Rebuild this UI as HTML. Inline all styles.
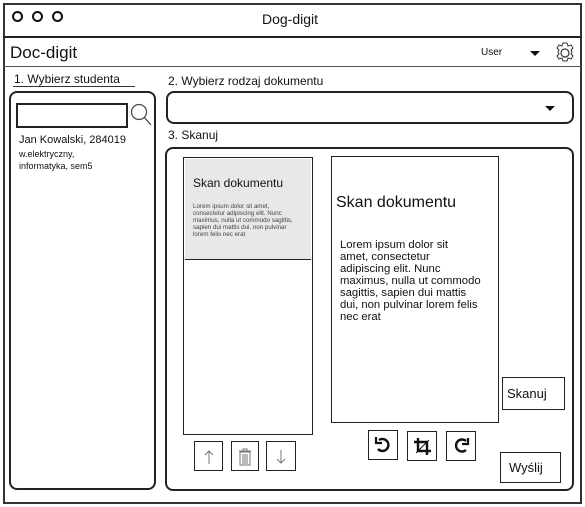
<!DOCTYPE html>
<html><head><meta charset="utf-8"><style>
*{margin:0;padding:0;box-sizing:border-box}
body{width:585px;height:507px;background:#fff;position:relative;overflow:hidden;font-family:"Liberation Sans",sans-serif;color:#111}
.a{position:absolute}
.b{border:2px solid #222}
.t{position:absolute;white-space:nowrap}
</style></head><body>
<div class="a" style="left:3px;top:3px;width:579px;height:501px;border:2px solid #333"></div>
<div class="a" style="left:3px;top:36px;width:579px;height:2px;background:#222"></div>
<div class="a" style="left:3px;top:66px;width:579px;height:1px;background:#555"></div>
<div class="a" style="left:12px;top:11px;width:11px;height:11px;border:2px solid #111;border-radius:50%"></div>
<div class="a" style="left:32px;top:11px;width:11px;height:11px;border:2px solid #111;border-radius:50%"></div>
<div class="a" style="left:52px;top:11px;width:11px;height:11px;border:2px solid #111;border-radius:50%"></div>
<div class="t" style="left:262px;top:11px;font-size:14px">Dog-digit</div>
<div class="t" style="left:10px;top:43px;font-size:17px">Doc-digit</div>
<div class="t" style="left:481px;top:47px;font-size:10px">User</div>
<div class="a" style="left:530px;top:51px;width:0;height:0;border-left:5px solid transparent;border-right:5px solid transparent;border-top:5px solid #111"></div>
<svg class="a" style="left:552px;top:41px" width="26" height="24" viewBox="0 0 26 24"><circle cx="13" cy="12" r="4" fill="none" stroke="#333" stroke-width="1.2"/><path d="M11 2h4l1 3 3-1 2 3-2 2 1 2-1 2 2 2-2 3-3-1-1 3h-4l-1-3-3 1-2-3 2-2-1-2 1-2-2-2 2-3 3 1z" fill="none" stroke="#333" stroke-width="1"/></svg>
<div class="t" style="left:14px;top:72px;font-size:12px">1. Wybierz studenta</div>
<div class="a" style="left:13px;top:86px;width:122px;height:1px;background:#333"></div>
<div class="t" style="left:168px;top:74px;font-size:12px">2. Wybierz rodzaj dokumentu</div>
<div class="t" style="left:168px;top:128px;font-size:12px">3. Skanuj</div>
<div class="a b" style="left:9px;top:91px;width:147px;height:399px;border-radius:8px;border-width:2px"></div>
<div class="a" style="left:16px;top:103px;width:112px;height:25px;border:2px solid #222"></div>
<svg class="a" style="left:129px;top:102px" width="24" height="26"><circle cx="10" cy="10" r="7.5" fill="none" stroke="#444" stroke-width="1.2"/><path d="M15 15l7 8" stroke="#444" stroke-width="1.3"/></svg>
<div class="t" style="left:19px;top:134px;font-size:11px">Jan Kowalski, 284019</div>
<div class="t" style="left:19px;top:148px;font-size:9px;line-height:12px">w.elektryczny,<br>informatyka, sem5</div>
<div class="a b" style="left:166px;top:91px;width:408px;height:33px;border-radius:8px"></div>
<div class="a" style="left:545px;top:106px;width:0;height:0;border-left:5px solid transparent;border-right:5px solid transparent;border-top:5px solid #111"></div>
<div class="a b" style="left:165px;top:147px;width:409px;height:344px;border-radius:8px"></div>
<div class="a b" style="left:183px;top:157px;width:130px;height:278px;border-width:1.5px"></div>
<div class="a" style="left:185px;top:159px;width:126px;height:101px;background:#e8e8e8;border-bottom:1.5px solid #222"></div>
<div class="t" style="left:193px;top:176px;font-size:12px">Skan dokumentu</div>
<div class="t" style="left:193px;top:203px;font-size:6.2px;line-height:7px;color:#444">Lorem ipsum dolor sit amet,<br>consectetur adipiscing elit. Nunc<br>maximus, nulla ut commodo sagittis,<br>sapien dui mattis dui, non pulvinar<br>lorem felis nec erat</div>
<div class="a b" style="left:331px;top:156px;width:168px;height:267px;border-width:1.5px"></div>
<div class="t" style="left:336px;top:194px;font-size:16px">Skan dokumentu</div>
<div class="t" style="left:340px;top:239px;font-size:11.3px;line-height:12px">Lorem ipsum dolor sit<br>amet, consectetur<br>adipiscing elit. Nunc<br>maximus, nulla ut commodo<br>sagittis, sapien dui mattis<br>dui, non pulvinar lorem felis<br>nec erat</div>
<div class="a b" style="left:502px;top:377px;width:63px;height:33px;border-width:1.5px"></div>
<div class="t" style="left:507px;top:386px;font-size:13px">Skanuj</div>
<div class="a b" style="left:500px;top:452px;width:61px;height:31px;border-width:1.5px"></div>
<div class="t" style="left:509px;top:460px;font-size:13px">Wyślij</div>
<div class="a b" style="left:368px;top:430px;width:30px;height:30px;border-width:1.5px"></div>
<div class="a b" style="left:407px;top:431px;width:30px;height:30px;border-width:1.5px"></div>
<div class="a b" style="left:446px;top:431px;width:30px;height:30px;border-width:1.5px"></div>
<svg class="a" style="left:372px;top:434px" width="22" height="22"><path d="M7 6A6 6 0 1 1 6 15" fill="none" stroke="#111" stroke-width="2.4"/><path d="M4 3v6h6" fill="none" stroke="#111" stroke-width="2.2"/></svg>
<svg class="a" style="left:411px;top:435px" width="22" height="22"><path d="M7 3v13h13M3 7h13v13" fill="none" stroke="#111" stroke-width="2.4"/><path d="M5 18L18 5" stroke="#111" stroke-width="1"/></svg>
<svg class="a" style="left:450px;top:435px" width="22" height="22"><path d="M16 6A6 6 0 1 0 16 15" fill="none" stroke="#111" stroke-width="2.4"/><path d="M18 3v6h-6" fill="none" stroke="#111" stroke-width="2.2"/></svg>
<div class="a b" style="left:194px;top:441px;width:29px;height:30px;border-width:1.5px"></div>
<div class="a b" style="left:231px;top:441px;width:28px;height:30px;border-width:1.5px"></div>
<div class="a b" style="left:266px;top:441px;width:30px;height:30px;border-width:1.5px"></div>
<svg class="a" style="left:201px;top:447px" width="16" height="20"><path d="M8 17V4M4 8l4-4 4 4" fill="none" stroke="#777" stroke-width="1"/></svg>
<svg class="a" style="left:237px;top:447px" width="16" height="20"><path d="M2 4h12M6 4V2h4v2M3 5h10v13H3zM6 7v10M8 7v10M10 7v10" fill="none" stroke="#777" stroke-width="1"/></svg>
<svg class="a" style="left:273px;top:447px" width="16" height="20"><path d="M8 3v13M4 12l4 4 4-4" fill="none" stroke="#777" stroke-width="1"/></svg>
</body></html>
